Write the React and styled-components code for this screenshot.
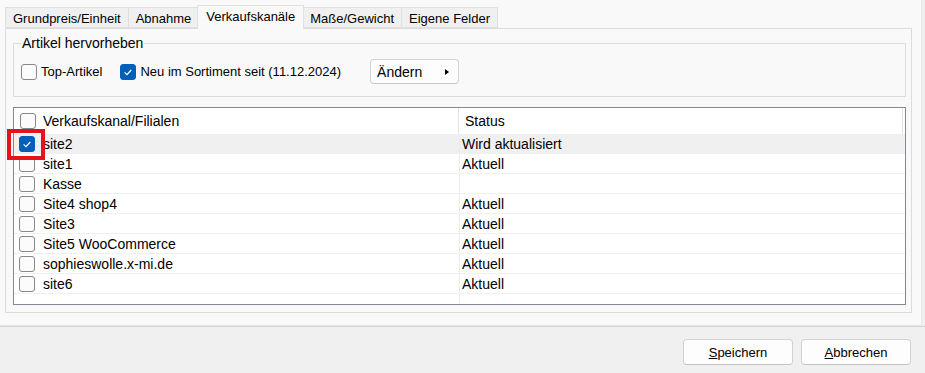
import React from 'react';
import styled, { createGlobalStyle } from 'styled-components';

const Global = createGlobalStyle`
  html, body { margin: 0; padding: 0; background: #f0f0f0; }
  body { font-family: "Liberation Sans", Arial, sans-serif; color: #000; }
  * { box-sizing: border-box; }
`;

const Window = styled.div`
  position: relative;
  width: 925px;
  height: 373px;
  display: flex;
  flex-direction: column;
  background: #f0f0f0;
  overflow: hidden;
`;

const Content = styled.div`
  width: 922px;
  height: 326px;
  flex: none;
  background: #f9f9f9;
  border-right: 1px solid #e9e9e9;
  border-bottom: 1px solid #e4e4e4;
  padding: 5px 0 0 5px;
`;

const TabStrip = styled.div`
  display: flex;
  align-items: flex-end;
  height: 23px;
  position: relative;
  z-index: 1;
  padding-left: 1px;
`;

const Tab = styled.div`
  height: ${p => (p.$active ? 24 : 21)}px;
  margin-bottom: ${p => (p.$active ? -1 : 0)}px;
  margin-left: ${p => (p.$active ? -2 : -1)}px;
  margin-right: ${p => (p.$active ? -1 : 0)}px;
  padding: ${p => (p.$active ? '0 8px 3px' : '1px 7px 0')};
  border: 1px solid #e0e0e0;
  border-bottom: ${p => (p.$active ? 'none' : '1px solid #e0e0e0')};
  background: ${p => (p.$active ? '#f9f9f9' : '#f0f0f0')};
  position: relative;
  z-index: ${p => (p.$active ? 2 : 1)};
  display: flex;
  align-items: center;
  font-size: 13px;
  white-space: nowrap;
`;

const Panel = styled.div`
  width: 907px;
  height: 285px;
  border: 1px solid #dcdcdc;
  padding: 6px 5px 7px 7px;
  display: flex;
  flex-direction: column;
`;

const GroupBox = styled.fieldset`
  margin: 0;
  padding: 8px 7px 12px;
  border: 1px solid #dcdcdc;
  min-width: 0;
`;

const GroupTitle = styled.legend`
  padding: 0 1px;
  font-size: 14px;
  line-height: 16px;
`;

const OptionRow = styled.div`
  display: flex;
  align-items: center;
  height: 25px;
`;

const CheckLabel = styled.label`
  display: flex;
  align-items: center;
  gap: 4px;
  font-size: 13px;
  margin-right: ${p => p.$gap || 0}px;
`;

const Box = styled.span`
  width: 16px;
  height: 16px;
  flex: none;
  border-radius: 3px;
  border: 1px solid ${p => (p.$checked ? '#005fb8' : '#878787')};
  background: ${p => (p.$checked ? '#005fb8' : '#fbfbfb')};
  display: inline-flex;
  align-items: center;
  justify-content: center;
`;

const Checkbox = ({ checked }) => (
  <Box $checked={checked}>
    {checked && (
      <svg width="14" height="14" viewBox="0 0 14 14">
        <polyline points="3.6,7.4 6,9.6 10.2,5" fill="none" stroke="#fff" strokeWidth="1.2" />
      </svg>
    )}
  </Box>
);

const ChangeButton = styled.button`
  width: 89px;
  height: 25px;
  padding: 0 9px 0 6px;
  border: 1px solid #d3d3d3;
  border-bottom-color: #c6c6c6;
  border-radius: 4px;
  background: #fdfdfd;
  font-family: inherit;
  font-size: 14px;
  color: #000;
  display: flex;
  align-items: center;
  justify-content: space-between;
`;

const Arrow = styled.span`
  width: 0;
  height: 0;
  border-top: 3.5px solid transparent;
  border-bottom: 3.5px solid transparent;
  border-left: 4px solid #000;
`;

const List = styled.div`
  margin-top: 10px;
  height: 200px;
  border: 1px solid #828790;
  background: #fff;
  display: flex;
  flex-direction: column;
  overflow: hidden;
`;

const HeaderRow = styled.div`
  display: grid;
  grid-template-columns: 445px 444px;
  height: 26px;
  flex: none;
`;

const HeaderCell = styled.div`
  display: flex;
  align-items: center;
  gap: 7px;
  padding-left: 6px;
  border-right: 1px solid #e5e5e5;
  font-size: 14px;
`;

const Row = styled.div`
  display: grid;
  grid-template-columns: 446px 443px;
  height: 20px;
  flex: none;
  border-bottom: 1px solid #f0f0f0;
  background: ${p => (p.$selected ? '#f0f0f0' : '#fff')};
`;

const Cell = styled.div`
  display: flex;
  align-items: center;
  gap: 8px;
  padding-left: ${p => (p.$first ? 5 : 2)}px;
  border-right: ${p => (p.$first ? '1px solid #ececec' : 'none')};
  font-size: 14px;
  white-space: nowrap;
`;

const Filler = styled.div`
  flex: 1;
  display: grid;
  grid-template-columns: 446px 443px;
`;

const FillerCell = styled.div`
  border-right: ${p => (p.$first ? '1px solid #ececec' : 'none')};
`;

const Marker = styled.div`
  position: absolute;
  left: 7px;
  top: 129px;
  width: 38px;
  height: 31px;
  border: 4px solid #e3151b;
  pointer-events: none;
`;

const Footer = styled.div`
  flex: 1;
  display: flex;
  justify-content: flex-end;
  align-items: flex-start;
  gap: 8px;
  padding: 12px 14px 0 0;
  border-top: 1px solid #d6d6d6;
`;

const FooterButton = styled.button`
  width: 110px;
  height: 26px;
  border: 1px solid #d3d3d3;
  border-bottom-color: #c4c4c4;
  border-radius: 4px;
  background: #fdfdfd;
  font-family: inherit;
  font-size: 13px;
  color: #000;
  padding: 0;
`;

const rows = [
  { name: 'site2', status: 'Wird aktualisiert', checked: true, selected: true },
  { name: 'site1', status: 'Aktuell' },
  { name: 'Kasse', status: '' },
  { name: 'Site4 shop4', status: 'Aktuell' },
  { name: 'Site3', status: 'Aktuell' },
  { name: 'Site5 WooCommerce', status: 'Aktuell' },
  { name: 'sophieswolle.x-mi.de', status: 'Aktuell' },
  { name: 'site6', status: 'Aktuell' },
];

const tabs = ['Grundpreis/Einheit', 'Abnahme', 'Verkaufskanäle', 'Maße/Gewicht', 'Eigene Felder'];

export default function App() {
  return (
    <Window>
      <Global />
      <Content>
        <TabStrip>
          {tabs.map(t => (
            <Tab key={t} $active={t === 'Verkaufskanäle'}>{t}</Tab>
          ))}
        </TabStrip>
        <Panel>
          <GroupBox>
            <GroupTitle>Artikel hervorheben</GroupTitle>
            <OptionRow>
              <CheckLabel $gap={18}>
                <Checkbox />
                Top-Artikel
              </CheckLabel>
              <CheckLabel $gap={29}>
                <Checkbox checked />
                Neu im Sortiment seit (11.12.2024)
              </CheckLabel>
              <ChangeButton>
                Ändern
                <Arrow />
              </ChangeButton>
            </OptionRow>
          </GroupBox>
          <List>
            <HeaderRow>
              <HeaderCell>
                <Checkbox />
                Verkaufskanal/Filialen
              </HeaderCell>
              <HeaderCell>Status</HeaderCell>
            </HeaderRow>
            {rows.map(r => (
              <Row key={r.name} $selected={r.selected}>
                <Cell $first>
                  <Checkbox checked={r.checked} />
                  {r.name}
                </Cell>
                <Cell>{r.status}</Cell>
              </Row>
            ))}
            <Filler>
              <FillerCell $first />
              <FillerCell />
            </Filler>
          </List>
        </Panel>
      </Content>
      <Footer>
        <FooterButton><u>S</u>peichern</FooterButton>
        <FooterButton><u>A</u>bbrechen</FooterButton>
      </Footer>
      <Marker />
    </Window>
  );
}
